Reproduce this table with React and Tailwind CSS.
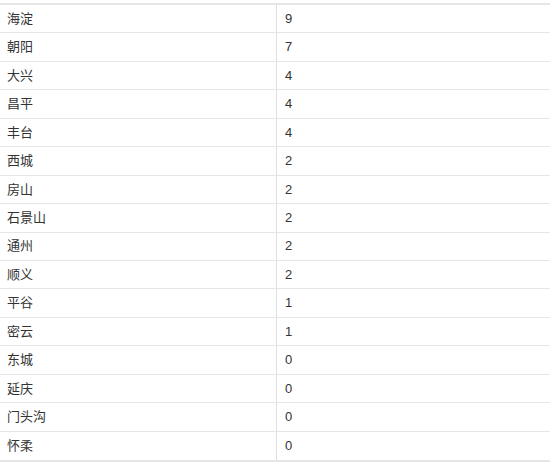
import React from "react";

const rows = [
  ["海淀", 9], ["朝阳", 7], ["大兴", 4], ["昌平", 4], ["丰台", 4], ["西城", 2],
  ["房山", 2], ["石景山", 2], ["通州", 2], ["顺义", 2], ["平谷", 1], ["密云", 1],
  ["东城", 0], ["延庆", 0], ["门头沟", 0], ["怀柔", 0],
];

export default function App() {
  return (
    <div className="w-[550px] h-[467px] bg-white pt-[3px] overflow-hidden" style={{ fontFamily: '"Liberation Sans", "Noto Sans CJK SC", sans-serif' }}>
      <div className="border-t-2 border-b-2 border-[#e6e6e6] text-[13px] text-[#333]">
        {rows.map(([name, n], i) => (
          <div key={name} className={`grid grid-cols-[277px_1fr] h-[28.44px] ${i < rows.length - 1 ? "border-b border-[#e6e6e6]" : ""}`}>
            <div className="flex items-center pl-[7px] border-r border-[#e0e0e0]">{name}</div>
            <div className="flex items-center pl-[8px]">{n}</div>
          </div>
        ))}
      </div>
    </div>
  );
}
